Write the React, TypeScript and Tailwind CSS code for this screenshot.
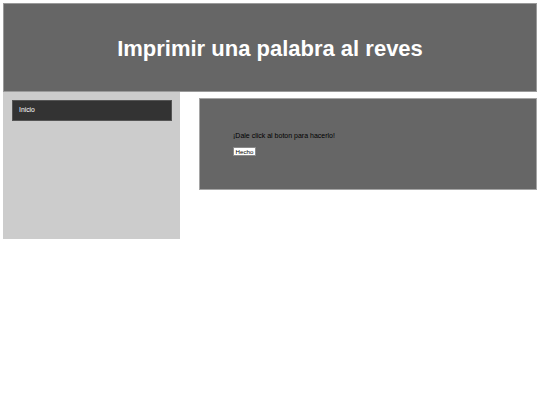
export default function App() {
  return (
    <div className="px-[3px] pt-[3px] font-['Liberation_Sans',Arial,sans-serif]">
      <header className="flex h-[89px] items-center justify-center border border-[#9a9a9a] bg-[#666666] pt-[2px]">
        <h1 className="text-[22px] font-bold text-white">Imprimir una palabra al reves</h1>
      </header>
      <div className="flex items-start">
        <aside className="h-[147px] w-[177px] shrink-0 bg-[#cccccc] pl-[9px] pr-[8px] pt-[8px]">
          <div className="flex h-[21px] items-center border border-[#555] bg-[#333333] pl-[6px] text-[6.8px] text-white">
            Inicio
          </div>
        </aside>
        <main className="ml-[19px] mt-[6px] h-[92px] flex-1 border border-[#a5a5a5] bg-[#666666] pl-[33px] pt-[33px]">
          <p className="text-[7px] leading-[8px] text-black">¡Dale click al boton para hacerlo!</p>
          <button className="mt-[7px] flex h-[9px] w-[23px] items-center justify-center border border-[#8a8a8a] bg-white text-[6.2px] leading-[7px] text-black">
            Hecho
          </button>
        </main>
      </div>
    </div>
  );
}
